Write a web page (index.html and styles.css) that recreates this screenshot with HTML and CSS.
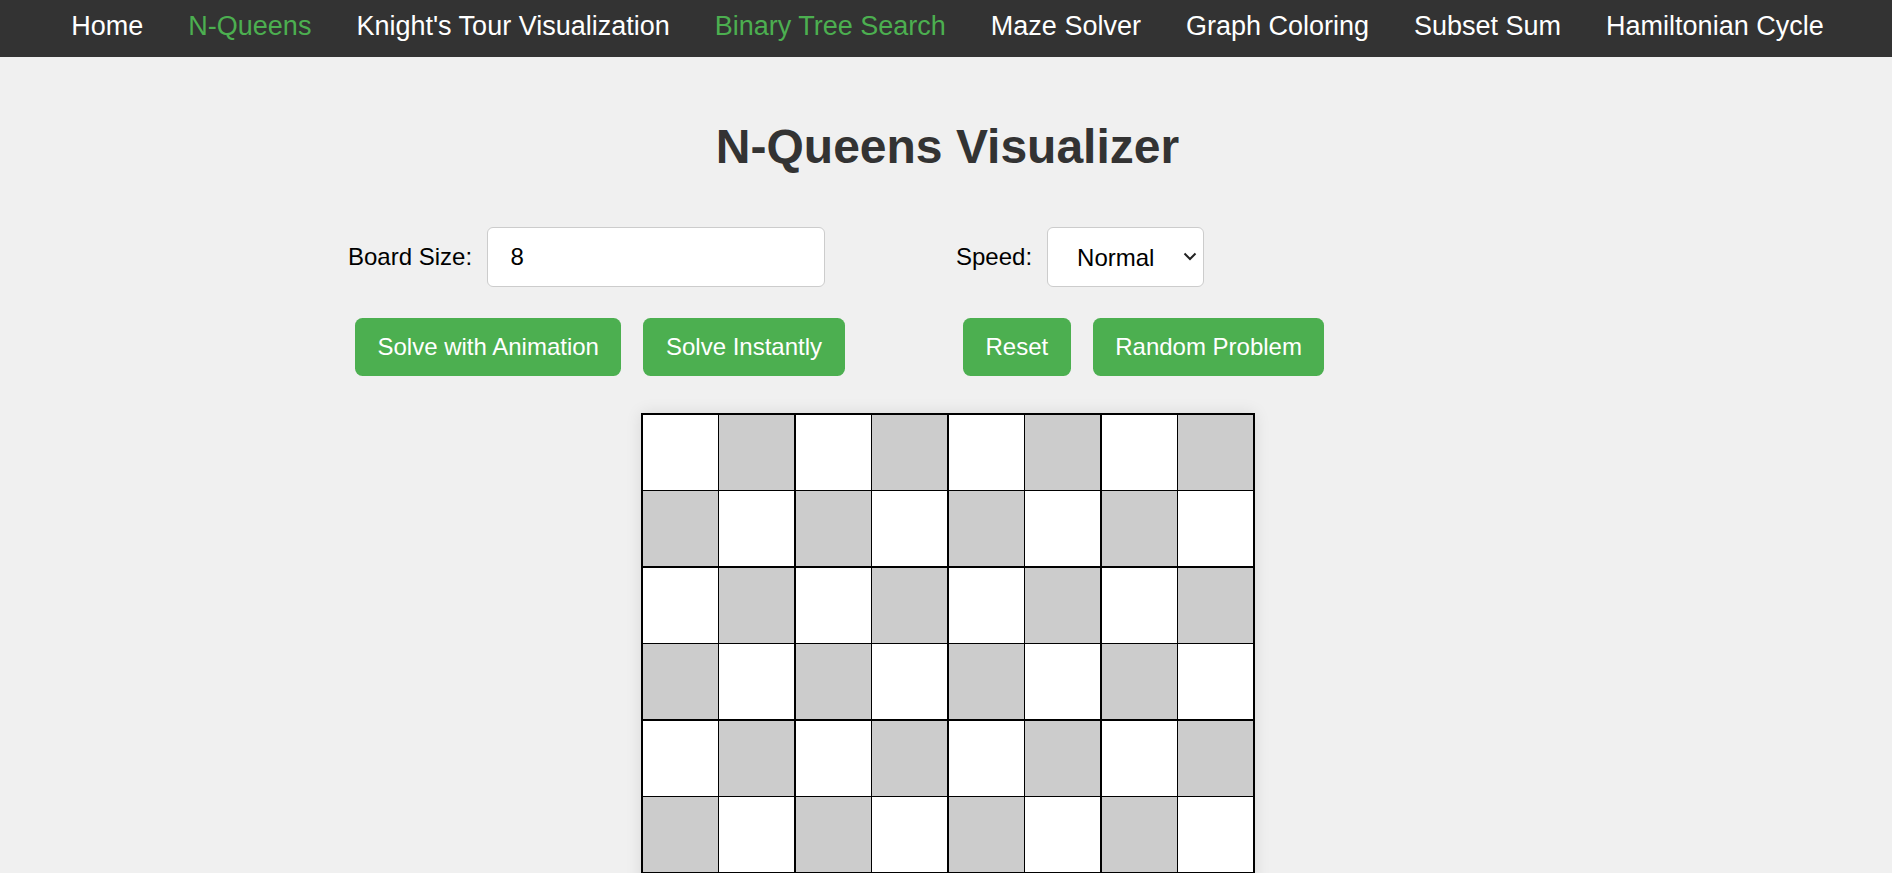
FILE: index.html
```html
<!DOCTYPE html>
<html lang="en">
<head>
<meta charset="utf-8">
<title>N-Queens Visualizer</title>
<link rel="stylesheet" href="styles.css">
</head>
<body>
<nav class="nav">
  <a href="#">Home</a>
  <a href="#" class="active">N-Queens</a>
  <a href="#">Knight's Tour Visualization</a>
  <a href="#" class="active">Binary Tree Search</a>
  <a href="#">Maze Solver</a>
  <a href="#">Graph Coloring</a>
  <a href="#">Subset Sum</a>
  <a href="#">Hamiltonian Cycle</a>
</nav>
<h1 class="title">N-Queens Visualizer</h1>
<div class="controls">
  <div class="field">
    <label for="size">Board Size:</label>
    <input id="size" class="size-input" type="number" value="8">
  </div>
  <div class="field">
    <label for="speed">Speed:</label>
    <span class="select-wrap">
      <select id="speed" class="speed-select">
        <option>Slow</option>
        <option selected>Normal</option>
        <option>Fast</option>
      </select>
      <svg class="chevron" width="14" height="9" viewBox="0 0 14 9" aria-hidden="true"><path d="M1.5 1.5 L7 7 L12.5 1.5" fill="none" stroke="#222" stroke-width="2"/></svg>
    </span>
  </div>
  <div class="buttons">
    <button class="btn">Solve with Animation</button>
    <button class="btn">Solve Instantly</button>
  </div>
  <div class="buttons">
    <button class="btn">Reset</button>
    <button class="btn">Random Problem</button>
  </div>
</div>
<div class="board">
  <div class="cell"></div><div class="cell dark"></div><div class="cell"></div><div class="cell dark"></div><div class="cell"></div><div class="cell dark"></div><div class="cell"></div><div class="cell dark"></div>
  <div class="cell dark"></div><div class="cell"></div><div class="cell dark"></div><div class="cell"></div><div class="cell dark"></div><div class="cell"></div><div class="cell dark"></div><div class="cell"></div>
  <div class="cell"></div><div class="cell dark"></div><div class="cell"></div><div class="cell dark"></div><div class="cell"></div><div class="cell dark"></div><div class="cell"></div><div class="cell dark"></div>
  <div class="cell dark"></div><div class="cell"></div><div class="cell dark"></div><div class="cell"></div><div class="cell dark"></div><div class="cell"></div><div class="cell dark"></div><div class="cell"></div>
  <div class="cell"></div><div class="cell dark"></div><div class="cell"></div><div class="cell dark"></div><div class="cell"></div><div class="cell dark"></div><div class="cell"></div><div class="cell dark"></div>
  <div class="cell dark"></div><div class="cell"></div><div class="cell dark"></div><div class="cell"></div><div class="cell dark"></div><div class="cell"></div><div class="cell dark"></div><div class="cell"></div>
  <div class="cell"></div><div class="cell dark"></div><div class="cell"></div><div class="cell dark"></div><div class="cell"></div><div class="cell dark"></div><div class="cell"></div><div class="cell dark"></div>
  <div class="cell dark"></div><div class="cell"></div><div class="cell dark"></div><div class="cell"></div><div class="cell dark"></div><div class="cell"></div><div class="cell dark"></div><div class="cell"></div>
</div>
</body>
</html>
```
FILE: styles.css
```css
* { box-sizing: border-box; }
body {
  margin: 0;
  background: #f0f0f0;
  font-family: "Liberation Sans", Arial, sans-serif;
  color: #000;
}
.nav {
  background: #333;
  display: flex;
  justify-content: center;
  padding: 11px 0 15px 3px;
}
.nav a {
  color: #fff;
  text-decoration: none;
  font-size: 27px;
  line-height: 31px;
  padding: 0 22.5px;
}
.nav a.active { color: #4caf50; }
.title {
  margin: 62px 0 0;
  padding-left: 3px;
  text-align: center;
  font-size: 48px;
  line-height: 55px;
  font-weight: bold;
  color: #333;
}
.controls {
  width: 1196px;
  margin: 53px auto 0;
  display: grid;
  grid-template-columns: 1fr 1fr;
  column-gap: 20px;
  row-gap: 31px;
}
.field {
  display: flex;
  align-items: center;
  gap: 15px;
  font-size: 24px;
}
.size-input {
  width: 338px;
  height: 59.5px;
  padding: 0 22.5px;
  font-size: 24px;
  font-family: inherit;
  border: 1px solid #ccc;
  border-radius: 6px;
  background: #fff;
  color: #000;
  -moz-appearance: textfield;
}
.size-input::-webkit-inner-spin-button,
.size-input::-webkit-outer-spin-button { -webkit-appearance: none; margin: 0; }
.select-wrap {
  position: relative;
  display: inline-block;
}
.speed-select {
  -webkit-appearance: none;
  appearance: none;
  display: block;
  width: 157px;
  height: 60px;
  padding: 0 0 0 29px;
  font-size: 24px;
  font-family: inherit;
  border: 1px solid #ccc;
  border-radius: 6px;
  background: #fff;
  color: #000;
}
.chevron {
  position: absolute;
  right: 7px;
  top: 25px;
  pointer-events: none;
}
.buttons {
  display: flex;
  gap: 22px;
  padding-left: 7px;
}
.btn {
  background: #4caf50;
  color: #fff;
  border: none;
  border-radius: 7.5px;
  padding: 15px 22.5px;
  font-size: 24px;
  line-height: 28px;
  font-family: inherit;
}
.board {
  width: 613.5px;
  margin: 37px 0 0 calc(50% - 305px);
  display: grid;
  grid-template-columns: repeat(8, 75px);
  grid-auto-rows: 75px;
  gap: 1.5px;
  padding: 1.5px;
  background: #000;
  box-shadow: 0 0 15px rgba(0, 0, 0, 0.1);
}
.cell { background: #fff; }
.cell.dark { background: #ccc; }
```
